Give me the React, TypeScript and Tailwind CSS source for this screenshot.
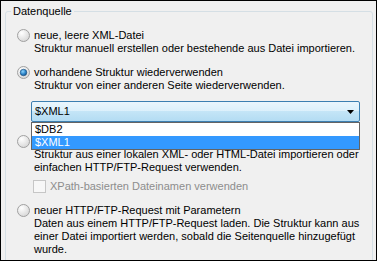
import React from 'react';

const font = { fontFamily: '"Liberation Sans", Arial, sans-serif' };

function Radio({ checked = false }: { checked?: boolean }) {
  return (
    <svg width="13" height="13" viewBox="0 0 13 13" className="shrink-0">
      <defs>
        <radialGradient id="rfill" cx="0.35" cy="0.3" r="0.8">
          <stop offset="0" stopColor="#ffffff" />
          <stop offset="1" stopColor="#d4d4d4" />
        </radialGradient>
        <radialGradient id="rdot" cx="0.4" cy="0.35" r="0.7">
          <stop offset="0" stopColor="#8fd3fb" />
          <stop offset="0.6" stopColor="#2a83c8" />
          <stop offset="1" stopColor="#184f86" />
        </radialGradient>
      </defs>
      <circle cx="6.5" cy="6.5" r="6" fill="url(#rfill)" stroke="#a0a0a0" strokeWidth="1" />
      {checked && <circle cx="6.5" cy="6.5" r="3.3" fill="url(#rdot)" stroke="#1b4f7d" strokeWidth="0.6" />}
    </svg>
  );
}

function Option({ checked, title, lines }: { checked?: boolean; title: string; lines: string[] }) {
  return (
    <div>
      <div className="flex items-center gap-[4px] h-[13px]">
        <Radio checked={checked} />
        <span>{title}</span>
      </div>
      {lines.map((l) => (
        <div key={l} className="pl-[17px] h-[13px]">{l}</div>
      ))}
    </div>
  );
}

export default function App() {
  return (
    <div
      style={font}
      className="w-[377px] h-[261px] border border-black bg-[#f0f0f0] overflow-hidden text-[11px] leading-[13px] text-black"
    >
      <div className="relative mt-[10px] ml-[4px] mr-[3px] h-[270px] border border-[#d5dfe5] rounded-[3px] pt-[17px] pl-[11px]">
        <span className="absolute -top-[7px] left-[5px] bg-[#f0f0f0] px-[2px]">Datenquelle</span>

        <Option
          title="neue, leere XML-Datei"
          lines={['Struktur manuell erstellen oder bestehende aus Datei importieren.']}
        />

        <div className="mt-[11px]">
          <Option
            checked
            title="vorhandene Struktur wiederverwenden"
            lines={['Struktur von einer anderen Seite wiederverwenden.']}
          />
        </div>

        <div className="relative mt-[9px] ml-[14px] w-[329px] h-[21px] border border-[#3c7fb1] rounded-[2px] bg-[linear-gradient(to_bottom,#eaf6fd_0%,#dbf0fb_50%,#c4e5f7_50%,#b3dcf3_100%)] flex items-center pl-[3px] pr-[5px]">
          <span className="flex-1">$XML1</span>
          <svg width="7" height="4" viewBox="0 0 7 4">
            <path d="M0 0H7L3.5 4Z" fill="#000" />
          </svg>
          <div className="absolute left-[-1px] right-[-1px] top-[20px] border border-[#646464] bg-white z-10">
            <div className="h-[13px] pl-[3px]">$DB2</div>
            <div className="h-[13px] pl-[3px] bg-[#3399ff] text-white">$XML1</div>
          </div>
        </div>

        <div className="mt-[13px]">
          <div className="flex items-center h-[13px]">
            <Radio />
          </div>
          <div className="pl-[17px]">Struktur aus einer lokalen XML- oder HTML-Datei importieren oder</div>
          <div className="pl-[17px]">einfachen HTTP/FTP-Request verwenden.</div>
          <div className="mt-[6px] ml-[16px] flex items-center gap-[4px] h-[13px] text-[#8d8d8d]">
            <span className="w-[13px] h-[13px] border border-[#c6c6c6] bg-[#f7f7f7] shrink-0" />
            <span>XPath-basierten Dateinamen verwenden</span>
          </div>
        </div>

        <div className="mt-[11px]">
          <Option
            title="neuer HTTP/FTP-Request mit Parametern"
            lines={[
              'Daten aus einem HTTP/FTP-Request laden. Die Struktur kann aus',
              'einer Datei importiert werden, sobald die Seitenquelle hinzugefügt',
              'wurde.',
            ]}
          />
        </div>
      </div>
    </div>
  );
}
